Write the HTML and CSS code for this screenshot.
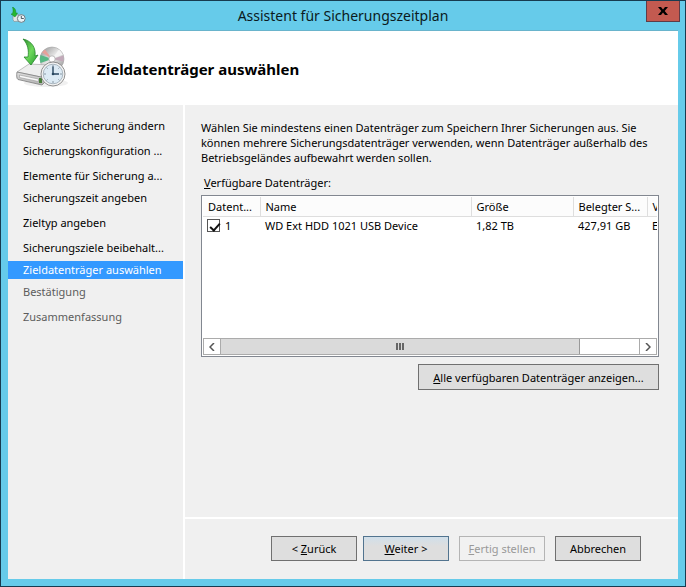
FILE: index.html
```html
<!DOCTYPE html>
<html lang="de">
<head>
<meta charset="UTF-8">
<meta name="viewport" content="width=device-width, initial-scale=1.0">
<title>Assistent für Sicherungszeitplan</title>
<link rel="stylesheet" href="styles.css">
</head>
<body>

<div class="window">
    <div class="titlebar">
        <svg class="app-icon" viewBox="0 0 16 16">
            <path d="M3 9l6-1.500 3 3v3.500l-8 .5-1-2z" fill="#e4e6e6" stroke="#86969a" stroke-width=".7"/>
            <path d="M2.500 0c2.500 1 3.500 3 3.300 6L7.500 6 5 10 1 7l1.500-.2C3.500 4 3 2 2.500 0z" fill="#25b82f" stroke="#168524" stroke-width=".5"/>
            <circle cx="11.300" cy="11.500" r="3.900" fill="#e9f3f8" stroke="#6f7c84"/>
            <path d="M11.300 8.800v2.700h2.500" fill="none" stroke="#3c4a55" stroke-width=".9"/>
        </svg>
        <h1>Assistent für Sicherungszeitplan</h1>
        <button class="close" aria-label="Schließen">
            <svg viewBox="0 0 10 8"><path d="M0 0h3l2 2.500L7 0h3L6.700 4 10 8H7L5 5.500 3 8H0l3.300-4z" fill="#000"/></svg>
        </button>
    </div>

    <div class="client">
        <div class="header">
            <svg class="wizard-icon" viewBox="0 0 54 54">
                <defs>
                    <linearGradient id="disk" x1="0" y1="0" x2="0" y2="1">
                        <stop offset="0" stop-color="#f7f7f7"/>
                        <stop offset="1" stop-color="#b2b2b2"/>
                    </linearGradient>
                    <linearGradient id="arrow" x1="0" y1="0" x2="1" y2="1">
                        <stop offset="0" stop-color="#2c8f2c"/>
                        <stop offset=".5" stop-color="#6fd95c"/>
                        <stop offset="1" stop-color="#239a2c"/>
                    </linearGradient>
                    <linearGradient id="cd" x1="0" y1="0" x2="1" y2="1">
                        <stop offset="0" stop-color="#8d8d8d"/>
                        <stop offset=".5" stop-color="#ececec"/>
                        <stop offset="1" stop-color="#8a8a8a"/>
                    </linearGradient>
                </defs>
                <ellipse cx="30" cy="46" rx="22" ry="4" fill="#f0f0f0"/>
                <!-- disc -->
                <circle cx="36" cy="22" r="12" fill="url(#cd)" stroke="#a3a3a3" stroke-width=".6"/>
                <path d="M36 22L24.500 18a12 12 0 0 0 0 8z" fill="#57b984"/>
                <path d="M36 22L26 15.500 29 12.500z" fill="#e7a09a"/>
                <path d="M36 22l7-9.500 4 5z" fill="#f4f4f4"/>
                <path d="M36 22l11.500-3.500v6z" fill="#c2a9b9"/>
                <circle cx="36" cy="22" r="3.200" fill="#fff" stroke="#aaa" stroke-width=".8"/>
                <!-- drive -->
                <path d="M1 35l12-8 21 1-9 12z" fill="#eeeeee" stroke="#b2b2b2" stroke-width=".8"/>
                <path d="M1 35l24 5 9-12v12l-8 8L2 42.500Q0 41 1 35z" fill="url(#disk)" stroke="#7c7c7c" stroke-width=".8"/>
                <path d="M3.500 38l19 4v2.500l-19-4z" fill="#f9f9f9" stroke="#969696" stroke-width=".6"/>
                <path d="M23 41h3v5h-3z" fill="#477c38"/>
                <!-- arrow -->
                <path d="M7 2c9 2 13 9 12 17l3-1-7 10L8 20l4 0c1-6 0-13-5-18z" fill="url(#arrow)" stroke="#27852c" stroke-width=".8"/>
                <!-- clock -->
                <circle cx="37" cy="37" r="12" fill="#f3f3f3" stroke="#777" stroke-width=".8"/>
                <circle cx="37" cy="37" r="9.800" fill="#dceaf4" stroke="#99a7b1" stroke-width=".8"/>
                <path d="M37 28v2M37 44v2M28 37h2M44 37h2M30.600 30.600l1 1M43.400 30.600l-1 1M30.600 43.400l1-1M43.400 43.400l-1-1" stroke="#7f8e9a" stroke-width=".9"/>
                <path d="M37 29.500V37h6" fill="none" stroke="#28465f" stroke-width="1.400"/>
                <circle cx="37" cy="37" r="1.300" fill="#28465f"/>
            </svg>
            <h2>Zieldatenträger auswählen</h2>
        </div>

        <div class="body">
            <ul class="steps">
                <li><a href="#">Geplante Sicherung ändern</a></li>
                <li><a href="#">Sicherungskonfiguration ...</a></li>
                <li><a href="#">Elemente für Sicherung a...</a></li>
                <li class="close-up"><a href="#">Sicherungszeit angeben</a></li>
                <li><a href="#">Zieltyp angeben</a></li>
                <li><a href="#">Sicherungsziele beibehalt...</a></li>
                <li class="close-up current"><a href="#">Zieldatenträger auswählen</a></li>
                <li class="close-up pending">Bestätigung</li>
                <li class="pending">Zusammenfassung</li>
            </ul>

            <div class="main">
                <div class="page">
                    <p class="intro">Wählen Sie mindestens einen Datenträger zum Speichern Ihrer Sicherungen aus. Sie<br>
                    können mehrere Sicherungsdatenträger verwenden, wenn Datenträger außerhalb des<br>
                    Betriebsgeländes aufbewahrt werden sollen.</p>
                    <p class="list-label" id="list-label"><u>V</u>erfügbare Datenträger:</p>

                    <div class="list">
                        <table aria-labelledby="list-label">
                            <colgroup>
                                <col class="col-disk">
                                <col class="col-name">
                                <col class="col-size">
                                <col class="col-used">
                                <col>
                            </colgroup>
                            <thead>
                                <tr><th>Datent...</th><th>Name</th><th>Größe</th><th>Belegter S...</th><th>V</th></tr>
                            </thead>
                            <tbody>
                                <tr>
                                    <td><label class="pick"><input type="checkbox" checked>1</label></td>
                                    <td>WD Ext HDD 1021 USB Device</td>
                                    <td>1,82 TB</td>
                                    <td>427,91 GB</td>
                                    <td>E</td>
                                </tr>
                            </tbody>
                        </table>
                        <div class="scrollbar">
                            <button class="scroll-arrow" aria-label="Nach links">
                                <svg viewBox="0 0 6 8"><path d="M5 0L1 4l4 4" fill="none" stroke="#555" stroke-width="1.500"/></svg>
                            </button>
                            <div class="track"><div class="thumb"><i></i><i></i><i></i></div></div>
                            <button class="scroll-arrow" aria-label="Nach rechts">
                                <svg viewBox="0 0 6 8"><path d="M1 0l4 4-4 4" fill="none" stroke="#555" stroke-width="1.500"/></svg>
                            </button>
                        </div>
                    </div>

                    <button class="btn show-all"><u>A</u>lle verfügbaren Datenträger anzeigen...</button>
                </div>

                <div class="footer">
                    <div class="nav">
                        <button class="btn">&lt; <u>Z</u>urück</button>
                        <button class="btn default"><u>W</u>eiter &gt;</button>
                    </div>
                    <button class="btn" disabled><u>F</u>ertig stellen</button>
                    <button class="btn">Abbrechen</button>
                </div>
            </div>
        </div>
    </div>
</div>

</body>
</html>
```

FILE: styles.css
```css
* {
    box-sizing: border-box;
}

body {
    margin: 0;
    font-family: "Noto Sans", "Open Sans", sans-serif;
    font-size: 11px;
    line-height: 15px;
    color: #000;
}

h1, h2, p, ul {
    margin: 0;
    padding: 0;
}

button {
    font: inherit;
    color: inherit;
    padding: 0;
}

.window {
    display: flex;
    flex-direction: column;
    min-height: 100vh;
    padding: 0 7px 7px;
    background: #66cbea;
    border: 1px solid #173b50;
}

.titlebar {
    position: relative;
    height: 30px;
    border-bottom: 1px solid #69b4cc;
}

.titlebar h1 {
    font-size: 14px;
    font-weight: normal;
    line-height: 30px;
    text-align: center;
    color: #0b1a20;
}

.app-icon {
    position: absolute;
    left: 2px;
    top: 6px;
    width: 16px;
    height: 16px;
}

.close {
    position: absolute;
    right: -2px;
    top: 0;
    width: 34px;
    height: 21px;
    background: #c35a50;
    border: 1px solid #5f3c47;
    border-top: none;
}

.close svg {
    display: block;
    width: 10px;
    height: 8px;
    margin: 0 auto;
}

.client {
    flex: 1;
    display: flex;
    flex-direction: column;
    background: #f0f0f0;
}

.header {
    display: flex;
    align-items: center;
    height: 74px;
    padding-left: 8px;
    background: #fff;
}

.wizard-icon {
    width: 54px;
    height: 54px;
    margin-bottom: 8px;
}

.header h2 {
    margin-left: 27px;
    padding-top: 2px;
    font-size: 15px;
    line-height: 20px;
}

.body {
    flex: 1;
    display: flex;
}

.steps {
    width: 177px;
    padding-top: 12px;
    list-style: none;
    border-right: 2px solid #fff;
}

.steps li {
    height: 18px;
    margin-bottom: 7px;
    padding-left: 15px;
    line-height: 17px;
    white-space: nowrap;
}

.steps li.close-up {
    margin-top: -3px;
}

.steps a {
    color: inherit;
    text-decoration: none;
}

.steps .current {
    background: #3399ff;
    color: #fff;
}

.steps .pending {
    color: #5c5c5c;
}

.main {
    flex: 1;
    min-width: 0;
    display: flex;
    flex-direction: column;
}

.page {
    flex: 1;
    display: flex;
    flex-direction: column;
    padding: 15px 19px 16px 16px;
}

.intro {
    white-space: nowrap;
}

.list-label {
    margin: 10px 3px 5px;
}

.list {
    display: flex;
    flex-direction: column;
    height: 162px;
    padding: 1px;
    background: #fff;
    border: 1px solid #828790;
    overflow: hidden;
}

table {
    width: 100%;
    table-layout: fixed;
    border-collapse: collapse;
}

.col-disk {
    width: 57px;
}

.col-name {
    width: 211px;
}

.col-size {
    width: 102px;
}

.col-used {
    width: 74px;
}

th, td {
    height: 18px;
    padding: 0 0 0 5px;
    font-weight: normal;
    text-align: left;
    white-space: nowrap;
    overflow: hidden;
}

th {
    height: 19px;
    background: #fcfcfc;
    border-right: 1px solid #dedede;
    border-bottom: 1px solid #dedede;
}

th:last-child {
    border-right: none;
}

td:first-child {
    padding-left: 4px;
}

.pick {
    display: flex;
    align-items: center;
    gap: 5px;
}

.pick input {
    appearance: none;
    position: relative;
    width: 13px;
    height: 13px;
    margin: 0;
    background: #fff;
    border: 1px solid #555;
}

.pick input:checked::after {
    content: "";
    position: absolute;
    left: 4px;
    top: 1px;
    width: 4px;
    height: 8px;
    border: solid #111;
    border-width: 0 2px 2px 0;
    transform: rotate(42deg);
}

.scrollbar {
    display: flex;
    height: 17px;
    margin-top: auto;
    border: 1px solid #ababab;
}

.scroll-arrow {
    display: flex;
    align-items: center;
    justify-content: center;
    width: 16px;
    background: #fff;
    border: none;
}

.scroll-arrow svg {
    width: 6px;
    height: 8px;
}

.track {
    flex: 1;
    border: solid #ababab;
    border-width: 0 1px;
}

.thumb {
    display: flex;
    align-items: center;
    justify-content: center;
    gap: 1px;
    width: 86%;
    height: 100%;
    background: #dadada;
    border-right: 1px solid #999;
}

.thumb i {
    width: 2px;
    height: 7px;
    background: #666;
}

.btn {
    width: 86px;
    height: 25px;
    background: #dedede;
    border: 1px solid #707070;
}

.btn:disabled {
    background: #f1f1f1;
    border-color: #b4b4b4;
    color: #999;
}

.btn.default {
    background: linear-gradient(#d0dfea, #dedede 40%);
    border-color: #52748f;
}

.show-all {
    align-self: flex-end;
    width: 241px;
    height: 26px;
    margin-top: 7px;
}

.footer {
    display: flex;
    justify-content: flex-end;
    gap: 10px;
    padding: 17px 37px 18px 0;
    border-top: 2px solid #fff;
}

.nav {
    display: flex;
    gap: 6px;
}
```
